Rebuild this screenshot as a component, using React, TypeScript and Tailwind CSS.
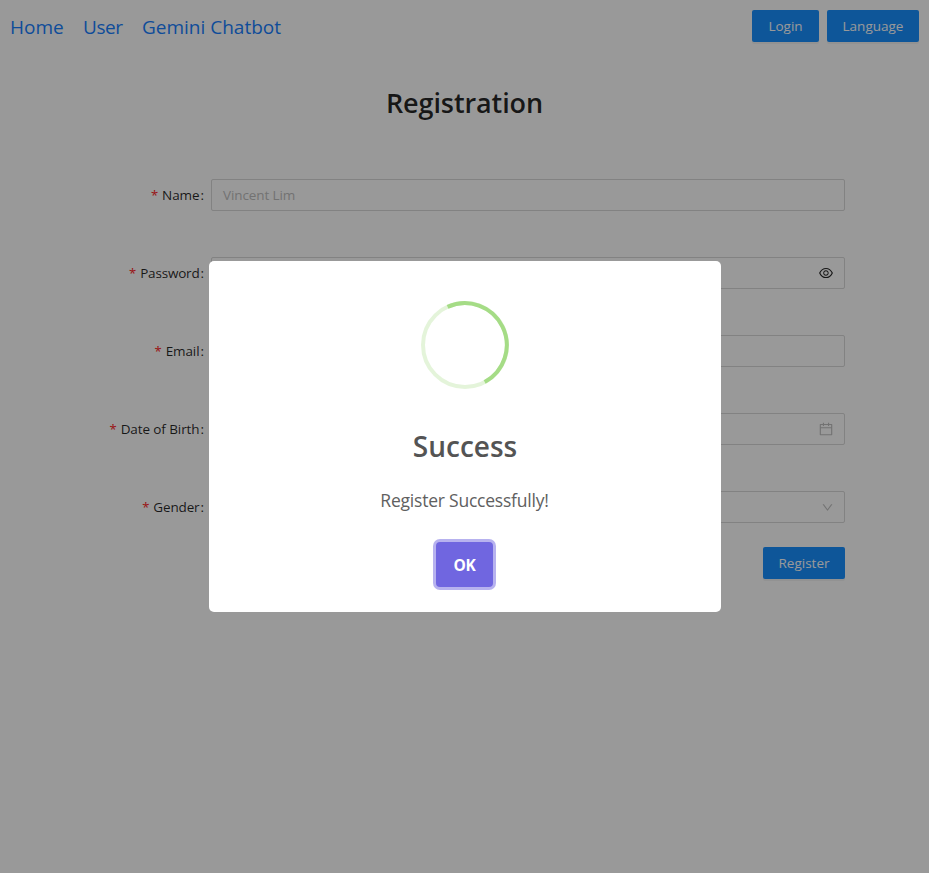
import type { ReactNode } from "react";
import { AiOutlineCalendar, AiOutlineDown, AiOutlineEye } from "react-icons/ai";

function Field({ label, tracking, children }: { label: string; tracking: string; children?: ReactNode }) {
  return (
    <div className="flex h-8 items-center">
      <label className="flex w-[204px] shrink-0 items-center justify-end text-[13.5px] leading-8 text-black/85">
        <span className="mr-1 font-['Noto_Sans',sans-serif] text-[13px] leading-7 text-[#ff2a2d]">*</span>
        <span className={tracking}>{label}</span>
        <span className="ml-px">:</span>
      </label>
      <div className="ml-[7px] flex h-8 w-[634px] items-center rounded-[2px] border border-[#d9d9d9] bg-white pl-[11px] pr-[10px] text-[13.5px]">
        {children}
      </div>
    </div>
  );
}

function NavButton({ children, className }: { children: ReactNode; className: string }) {
  return (
    <button
      className={`flex h-8 items-center justify-center rounded-[2px] bg-[#1890ff] text-[13.5px] text-white shadow-[0_2px_0_rgba(0,0,0,0.045)] ${className}`}
    >
      {children}
    </button>
  );
}

export default function App() {
  return (
    <div className="relative h-[873px] w-[929px] overflow-hidden bg-white font-['Open_Sans','Noto_Sans',sans-serif]">
      <header className="flex h-[52px] items-center justify-between px-[10px]">
        <nav className="flex items-center gap-[19px] pt-[2px] text-[19px] text-[#1880ff]">
          <a className="w-[54px] whitespace-nowrap">Home</a>
          <a className="w-[40px] whitespace-nowrap tracking-[-0.4px]">User</a>
          <a className="whitespace-nowrap">Gemini Chatbot</a>
        </nav>
        <div className="flex gap-2">
          <NavButton className="w-[67px]">Login</NavButton>
          <NavButton className="w-[92px]">Language</NavButton>
        </div>
      </header>
      <h1 className="mt-[31px] text-center text-[27px] font-semibold leading-10 tracking-[-0.1px] text-black/85">Registration</h1>
      <form className="mt-14 flex flex-col gap-[46px]">
        <Field label="Name" tracking="tracking-[-0.1px]">
          <span className="tracking-[-0.1px] text-[#bfbfbf]">Vincent Lim</span>
        </Field>
        <Field label="Password" tracking="tracking-[-0.2px]">
          <AiOutlineEye className="ml-auto size-4 text-black/85" />
        </Field>
        <Field label="Email" tracking="tracking-[-0.1px]" />
        <Field label="Date of Birth" tracking="tracking-[-0.1px]">
          <AiOutlineCalendar className="ml-auto size-4 text-black/25" />
        </Field>
        <Field label="Gender" tracking="tracking-[-0.15px]">
          <AiOutlineDown className="ml-auto size-[13px] text-black/25" />
        </Field>
      </form>
      <div className="mt-6 flex pl-[763px]">
        <NavButton className="w-[82px]">Register</NavButton>
      </div>

      <div className="absolute inset-0 bg-black/40 pl-[209px] pt-[261px]">
        <div className="flex h-[351px] w-[512px] flex-col items-center rounded-[5px] bg-white pt-10">
          <svg className="size-[88px] shrink-0" viewBox="0 0 88 88" fill="none" strokeWidth="4">
            <circle cx="44" cy="44" r="42" stroke="#a5dc86" strokeOpacity="0.3" />
            <path d="M26.6 5.8A42 42 0 0 1 63.7 81.1" stroke="#a5dc86" />
          </svg>
          <h2 className="mt-[36px] text-[28px] font-semibold leading-[42px] text-[#545454]">Success</h2>
          <p className="mr-px mt-[19px] text-[17.5px] leading-7 tracking-[-0.22px] text-[#606060]">Register Successfully!</p>
          <button className="mr-px mt-[28px] flex h-[45px] w-[57px] items-center justify-center rounded-[4px] bg-[#7066e0] pt-[2px] text-[15.5px] font-bold tracking-[-0.2px] text-white shadow-[0_0_0_3px_rgba(112,102,224,0.5)]">
            OK
          </button>
        </div>
      </div>
    </div>
  );
}
